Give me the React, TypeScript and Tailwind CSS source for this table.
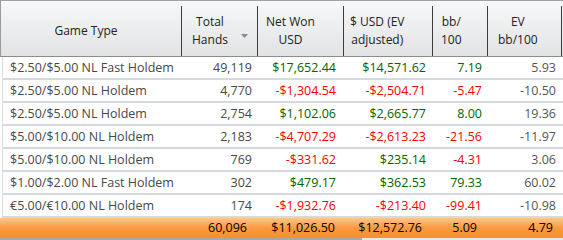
import React from "react";

type Row = {
  game: string;
  hands: string;
  won: string;
  ev: string;
  bb: string;
  evbb: string;
};

const rows: Row[] = [
  { game: "$2.50/$5.00 NL Fast Holdem", hands: "49,119", won: "$17,652.44", ev: "$14,571.62", bb: "7.19", evbb: "5.93" },
  { game: "$2.50/$5.00 NL Holdem", hands: "4,770", won: "-$1,304.54", ev: "-$2,504.71", bb: "-5.47", evbb: "-10.50" },
  { game: "$2.50/$5.00 NL Holdem", hands: "2,754", won: "$1,102.06", ev: "$2,665.77", bb: "8.00", evbb: "19.36" },
  { game: "$5.00/$10.00 NL Holdem", hands: "2,183", won: "-$4,707.29", ev: "-$2,613.23", bb: "-21.56", evbb: "-11.97" },
  { game: "$5.00/$10.00 NL Holdem", hands: "769", won: "-$331.62", ev: "$235.14", bb: "-4.31", evbb: "3.06" },
  { game: "$1.00/$2.00 NL Fast Holdem", hands: "302", won: "$479.17", ev: "$362.53", bb: "79.33", evbb: "60.02" },
  { game: "€5.00/€10.00 NL Holdem", hands: "174", won: "-$1,932.76", ev: "-$213.40", bb: "-99.41", evbb: "-10.98" },
];

const cls = (v: string) => (v.startsWith("-") ? "text-[#ff0000]" : "text-[#006400]");

const cols = "grid grid-cols-[181px_76px_86px_89px_55px_74px_1fr]";

function HeadCell({
  children,
  center,
  pl = "pl-[8px]",
  arrow,
}: {
  children: React.ReactNode;
  center?: boolean;
  pl?: string;
  arrow?: boolean;
}) {
  return (
    <div className="flex h-full">
      <div className={`flex flex-1 items-center pt-[4px] ${center ? "justify-center pr-[10px]" : `justify-start ${pl}`}`}>
        <div className="text-center leading-[18px]">{children}</div>
        {arrow && (
          <svg width="7" height="4" viewBox="0 0 7 4" className="ml-auto mr-[9px] mt-[10px]">
            <path d="M0 0 L7 0 L3.5 4 Z" fill="#8a8a8a" />
          </svg>
        )}
      </div>
      <div className="w-px self-end h-[50px] bg-[#3c3c3c]" />
    </div>
  );
}

export default function App() {
  return (
    <div
      className="w-[563px] h-[240px] bg-white overflow-hidden text-[12.5px]"
      style={{ fontFamily: '"Open Sans", "Noto Sans", sans-serif' }}
    >
      {/* Header */}
      <div
        className={`${cols} h-[57px] border-t border-t-[#a0a0a0] border-b border-b-[#8c8c8c] border-l border-l-[#9a9a9a] bg-gradient-to-b from-[#f7f8f9] to-[#e2e3e5] text-[#222] text-[12px]`}
      >
        <HeadCell center>Game Type</HeadCell>
        <HeadCell arrow pl="pl-[10px]">
          Total
          <br />
          Hands
        </HeadCell>
        <HeadCell>
          Net Won
          <br />
          USD
        </HeadCell>
        <HeadCell pl="pl-[6px]">
          $ USD (EV
          <br />
          adjusted)
        </HeadCell>
        <HeadCell>
          bb/
          <br />
          100
        </HeadCell>
        <HeadCell pl="pl-[10px]">
          EV
          <br />
          bb/100
        </HeadCell>
        <div />
      </div>

      {/* Body */}
      <div className="pl-[2px]">
        <div className="border-l border-l-[#d8dce0]">
          {rows.map((r, i) => (
            <div
              key={i}
              className={`${cols} h-[23px] pt-[2px] items-center border-b-2 border-b-[#d6dadf]`}
            >
              <div className="pl-[7px] text-[#484848] whitespace-nowrap">{r.game}</div>
              <div className="text-right pr-[8px] text-[#484848]">{r.hands}</div>
              <div className={`text-right pr-[10px] ${cls(r.won)}`}>{r.won}</div>
              <div className={`text-right pr-[9px] ${cls(r.ev)}`}>{r.ev}</div>
              <div className={`text-right pr-[8px] ${cls(r.bb)}`}>{r.bb}</div>
              <div className="text-right pr-[8px] text-[#555]">{r.evbb}</div>
              <div />
            </div>
          ))}
        </div>
      </div>

      {/* Totals */}
      <div
        className={`${cols} h-[20px] items-center text-black bg-gradient-to-b from-[#fdc58c] via-[#fb9a3c] to-[#f8902a]`}
      >
        <div />
        <div className="text-right pr-[10px]">60,096</div>
        <div className="text-right pr-[8px]">$11,026.50</div>
        <div className="text-right pr-[10px]">$12,572.76</div>
        <div className="text-right pr-[10px]">5.09</div>
        <div className="text-right pr-[8px]">4.79</div>
        <div />
      </div>

      {/* Scrollbar strip */}
      <div className="flex h-[3px]">
        <div className="w-[362px] bg-[#a9a9a9]" />
        <div className="flex-1 bg-[#e8e8e8]" />
      </div>
    </div>
  );
}
